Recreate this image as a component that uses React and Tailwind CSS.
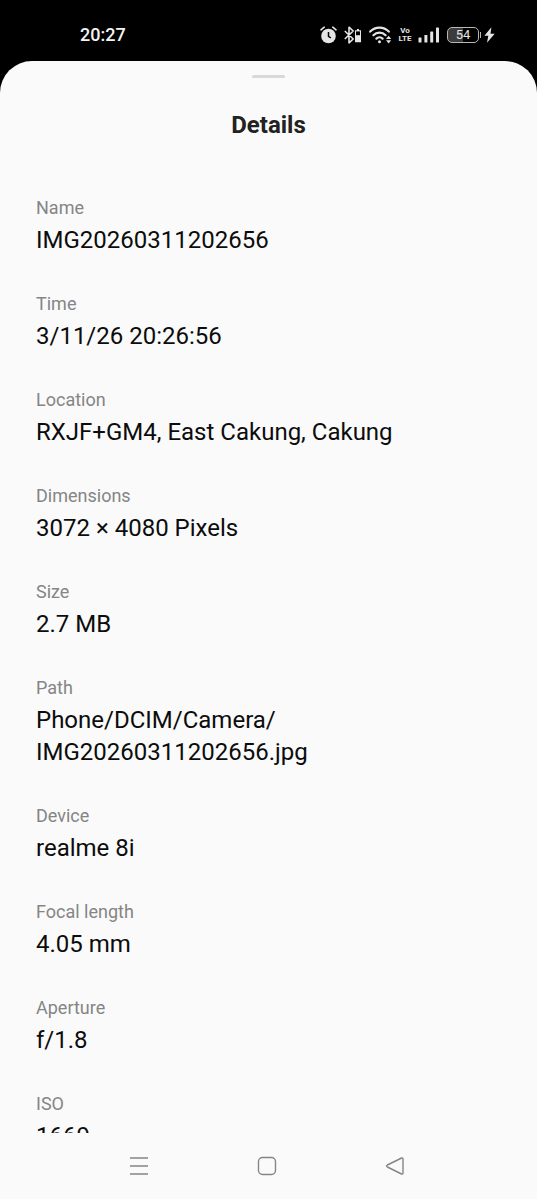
const details = [
  { label: 'Name', value: 'IMG20260311202656' },
  { label: 'Time', value: '3/11/26 20:26:56' },
  { label: 'Location', value: 'RXJF+GM4, East Cakung, Cakung' },
  { label: 'Dimensions', value: '3072 × 4080 Pixels' },
  { label: 'Size', value: '2.7 MB' },
  {
    label: 'Path',
    value: (
      <>
        Phone/DCIM/Camera/
        <wbr />
        IMG20260311202656.jpg
      </>
    ),
  },
  { label: 'Device', value: 'realme 8i' },
  { label: 'Focal length', value: '4.05 mm' },
  { label: 'Aperture', value: 'f/1.8' },
  { label: 'ISO', value: '1669' },
];

function AlarmIcon() {
  return (
    <svg width="17" height="18" viewBox="0 0 17 18" fill="none" aria-hidden="true">
      <circle cx="8.5" cy="10" r="7.3" fill="#e4e4e4" />
      <path d="M1 3.8 4.2 1.2M16 3.8 12.8 1.2" stroke="#e4e4e4" strokeWidth="1.6" strokeLinecap="round" />
      <path d="M8.5 6v4.4l2.4 1.6" stroke="#000" strokeWidth="1.5" />
    </svg>
  );
}

function BluetoothIcon() {
  return (
    <svg width="18" height="18" viewBox="0 0 18 18" fill="none" aria-hidden="true">
      <path d="M.8 5l8.4 8-4.2 3.8V1.2L9.2 5l-8.4 8" stroke="#e4e4e4" strokeWidth="1.6" strokeLinejoin="round" />
      <path d="M13 3h2v1.2h2v12h-6v-12h2z" fill="#e4e4e4" />
      <path d="M12 5.4h4v3.8h-4z" fill="#000" />
    </svg>
  );
}

function WifiIcon() {
  return (
    <svg width="23" height="18" viewBox="0 0 23 18" fill="none" aria-hidden="true">
      <path d="M1.2 5.6a13 13 0 0 1 18.6 0" stroke="#e4e4e4" strokeWidth="2.2" strokeLinecap="round" />
      <path d="M4.4 9.2a8.6 8.6 0 0 1 12.2 0" stroke="#e4e4e4" strokeWidth="2.2" strokeLinecap="round" />
      <path d="M7.4 12.6a4.4 4.4 0 0 1 6.2 0" stroke="#e4e4e4" strokeWidth="2.2" strokeLinecap="round" />
      <circle cx="10.5" cy="15.8" r="1.5" fill="#e4e4e4" />
      <path d="M19.6 9.800l2.600 3.200h-5.200zM19.600 17.400l2.600-3.200h-5.200z" fill="#e4e4e4" />
    </svg>
  );
}

function SignalIcon() {
  return (
    <svg width="22" height="16" viewBox="0 0 22 16" fill="#e4e4e4" aria-hidden="true">
      <rect x="0.5" y="10.5" width="3" height="5" rx="0.6" />
      <rect x="6.4" y="8" width="3" height="7.5" rx="0.6" />
      <rect x="12.2" y="4.5" width="3" height="11" rx="0.6" />
      <rect x="18" y="0.5" width="3" height="15" rx="0.6" />
    </svg>
  );
}

function BoltIcon() {
  return (
    <svg width="11" height="16" viewBox="0 0 11 16" fill="#e4e4e4" aria-hidden="true">
      <path d="M7.4.2.4 8.8h3.9l-1.300 7L10.700 6.800H6.500z" />
    </svg>
  );
}

function StatusBar() {
  return (
    <div className="flex h-[61px] shrink-0 items-center justify-between pt-2 pr-[42px] pl-20 text-[#e4e4e4]">
      <span className="text-lg font-medium text-[#f4f4f4]">20:27</span>
      <div className="flex items-center gap-[7px]">
        <AlarmIcon />
        <BluetoothIcon />
        <WifiIcon />
        <div className="flex w-3 flex-col items-center text-[8px] leading-[8px] font-bold">
          <span>Vo</span>
          <span>LTE</span>
        </div>
        <SignalIcon />
        <div className="flex items-center gap-[3px]">
          <div className="flex items-center gap-px">
            <span className="flex h-4 w-8 items-center justify-center rounded-[5px] border border-[#b8b8b8] bg-linear-to-r from-[#3c3c3c] from-50% to-black to-50% text-[13px] leading-none">
              54
            </span>
            <span className="h-1.5 w-px bg-[#b8b8b8]" />
          </div>
          <BoltIcon />
        </div>
      </div>
    </div>
  );
}

function NavBar() {
  return (
    <nav className="flex h-[66px] shrink-0 items-center justify-center gap-[104px] pr-1">
      <button type="button" aria-label="Recent apps">
        <svg width="24" height="24" viewBox="0 0 24 24" fill="none" stroke="#858585" strokeWidth="1.4">
          <path d="M3 4h18M3 12h18M3 20h18" />
        </svg>
      </button>
      <button type="button" aria-label="Home">
        <svg width="24" height="24" viewBox="0 0 24 24" fill="none" stroke="#858585" strokeWidth="1.4">
          <rect x="3.5" y="3.5" width="17" height="17" rx="4" />
        </svg>
      </button>
      <button type="button" aria-label="Back">
        <svg width="24" height="24" viewBox="0 0 24 24" fill="none" stroke="#858585" strokeWidth="1.4" strokeLinejoin="round">
          <path d="M18.6 4 4.4 11q-1.8 1 0 2l14.2 7q1.4.5 1.4-1V5q0-1.5-1.4-1z" />
        </svg>
      </button>
    </nav>
  );
}

export default function App() {
  return (
    <div className="flex h-screen flex-col bg-black font-[Roboto,sans-serif]">
      <StatusBar />

      <main className="flex min-h-0 flex-1 flex-col rounded-t-[32px] bg-[#fafafa]">
        {/* Drag handle */}
        <div className="mx-auto mt-[14px] h-[3px] w-[33px] shrink-0 rounded-full bg-[#d8d8d8]" />

        <h1 className="mt-[31px] shrink-0 text-center text-2xl font-bold text-[#222222]">Details</h1>

        <dl className="mt-[55px] flex min-h-0 flex-1 flex-col gap-9 overflow-hidden px-9">
          {details.map((item) => (
            <div key={item.label} className="flex shrink-0 flex-col gap-1">
              <dt className="text-lg leading-6 text-[#858585]">{item.label}</dt>
              <dd className="text-2xl text-[#0c0c0c]">{item.value}</dd>
            </div>
          ))}
        </dl>

        <NavBar />
      </main>
    </div>
  );
}
